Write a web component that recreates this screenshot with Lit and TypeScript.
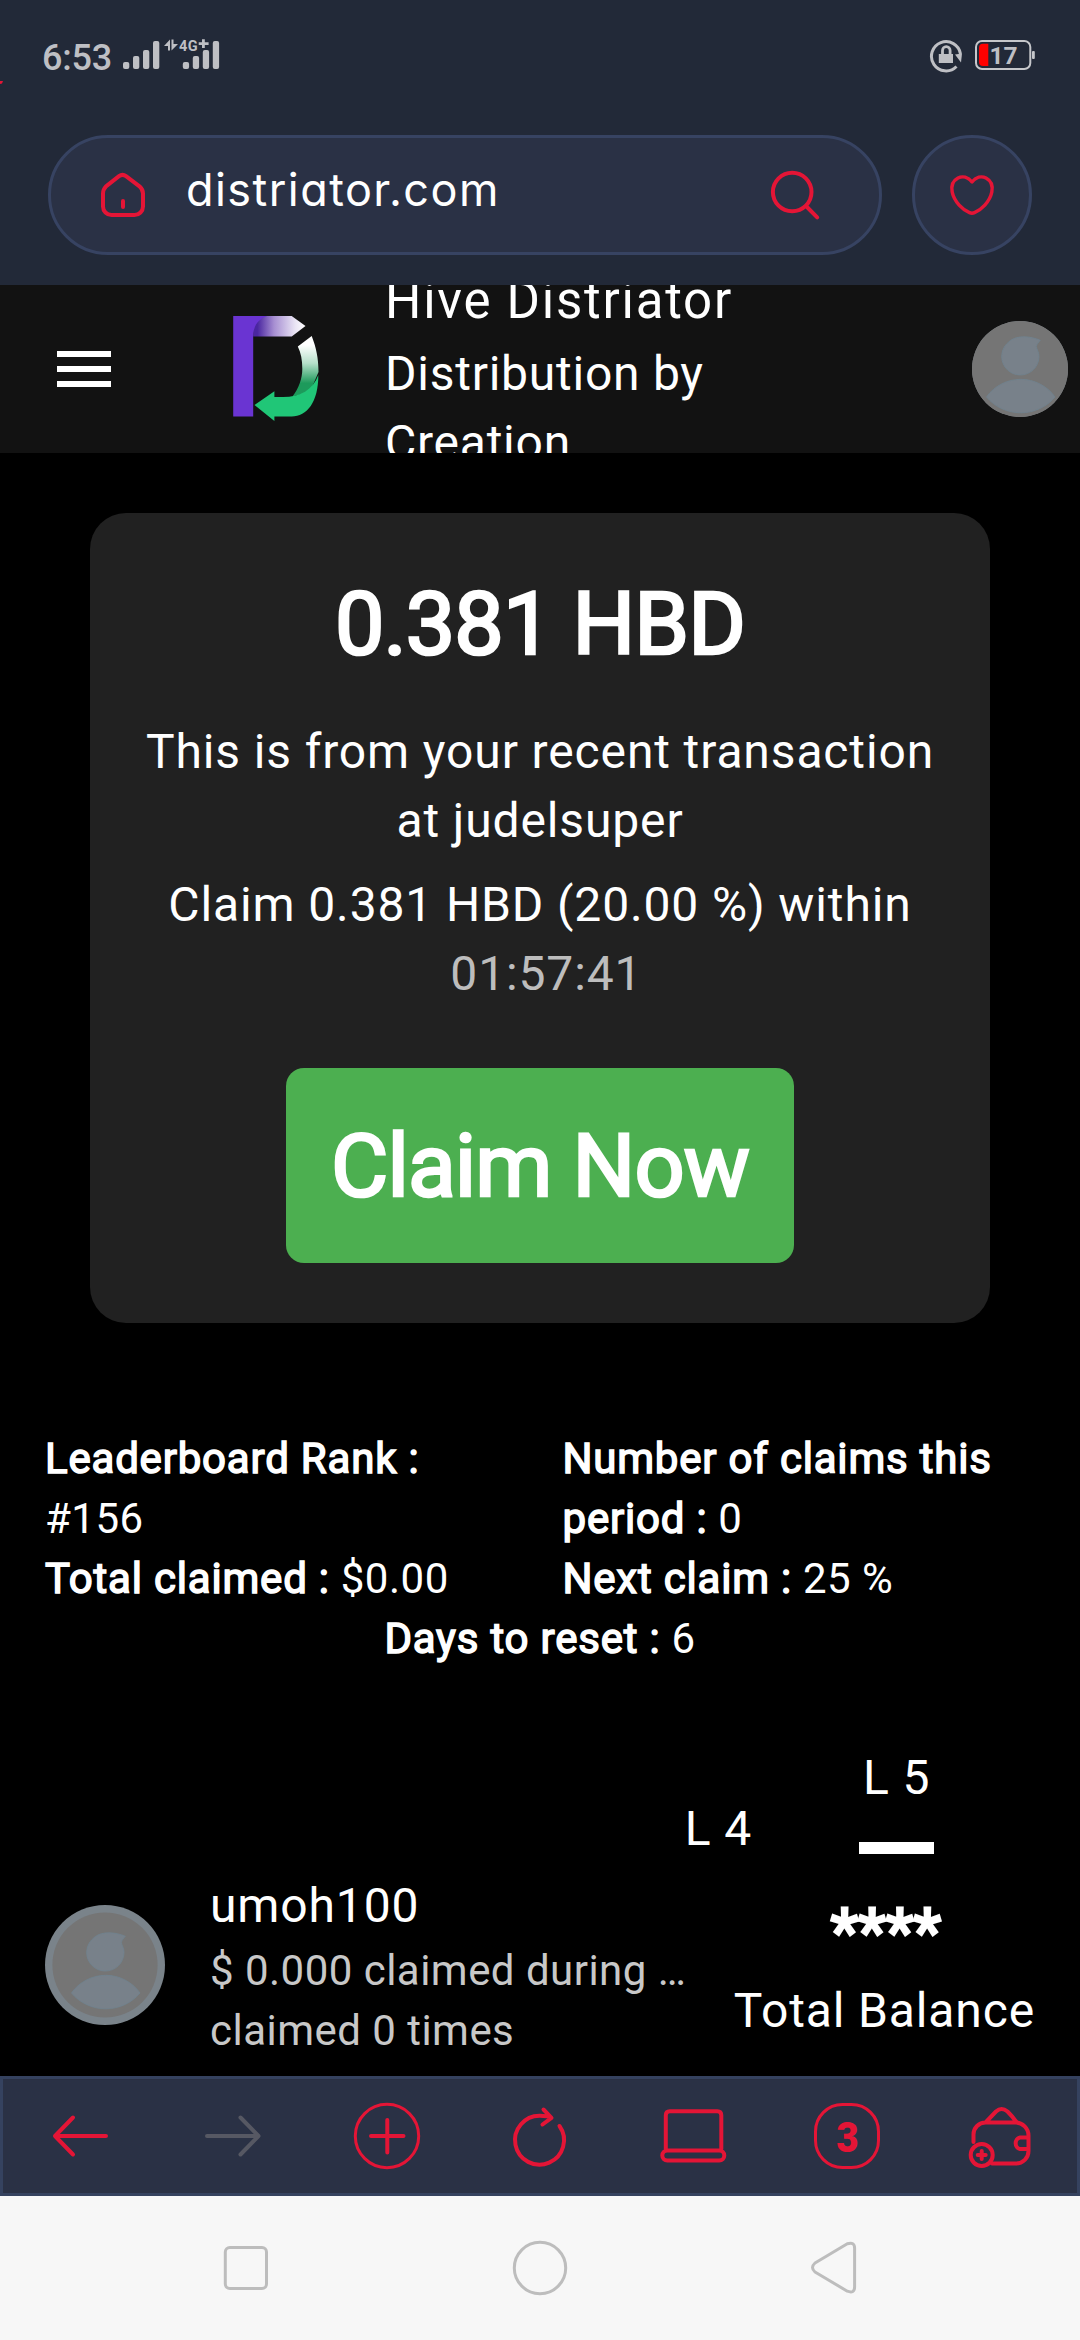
import { LitElement, html, css, svg } from 'lit';
import { customElement } from 'lit/decorators.js';

/* Placeholder portrait, drawn around the centre of its circle. */
const portrait = svg`
  <circle r="60" fill="#7a838a"/>
  <circle r="52.6" fill="#757575"/>
  <path d="M20.3 -28.7 C10 -33.3 -3 -33.5 -9.5 -28.5 C-15.5 -24 -18.3 -19 -18.3 -12 A18.6 18.6 0 0 0 0.3 6 A18.6 18.6 0 0 0 19 -12.500 C19 -17 17 -19 16.300 -22.500 C16.800 -25 18.500 -26.500 20.300 -28.700Z" fill="#78818a" stroke="#70838f" stroke-width=".8"/>
  <path d="M-33.500 28 A42 42 0 0 1 35 28 A45 45 0 0 1 -33.500 28Z" fill="#78818a" stroke="#70838f" stroke-width=".8"/>`;

@customElement('status-bar')
class StatusBar extends LitElement {
  static styles = css`
    :host { display: flex; align-items: flex-start; height: 135px; padding: 0 44px 0 0; box-sizing: border-box; font-family: Roboto, sans-serif; color: #bebfc4; }
    .mark { display: block; margin-top: 81px; width: 3px; height: 3px; }
    .time { margin: 35px 0 0 39px; width: 80px; font-size: 36px; line-height: 46px; font-weight: 500; letter-spacing: -.2px; }
    .signal { margin-top: 36px; display: block; }
    .spacer { flex: 1; }
    .lock { margin: 38px 12px 0 0; display: block; }
    .battery { margin: 38px 0 0; display: block; }
    text { font-family: Roboto, sans-serif; font-weight: 700; fill: #bebfc4; }
  `;
  render() {
    return html`
      <svg class="mark" viewBox="0 0 3 3"><path d="M0 0H3L2 2.500L0 3Z" fill="#e41536"/></svg>
      <div class="time">6:53</div>
      <svg class="signal" width="98" height="36" viewBox="122 36 98 36" fill="#bebfc4">
        <rect x="123" y="62" width="6.300" height="7" rx="2"/><rect x="133" y="56" width="6.300" height="13" rx="2"/>
        <rect x="143" y="50" width="6.300" height="19" rx="2"/><rect x="153" y="41" width="6.300" height="28" rx="2"/>
        <rect x="182.800" y="62" width="6.300" height="7" rx="2"/><rect x="192.800" y="56" width="6.300" height="13" rx="2"/>
        <rect x="202.800" y="50" width="6.300" height="19" rx="2"/><rect x="212.800" y="41" width="6.300" height="28" rx="2"/>
        <path d="M170 39.500V50.500H168V46H164Z"/><path d="M171.500 50.500V39.500H173.500V44H178Z"/>
        <text x="179" y="51" font-size="14.500" letter-spacing=".4">4G</text>
        <path d="M202 39.300h2.800v3h3.800v2.800h-3.800v3h-2.800v-3h-3.300v-2.800h3.300z"/>
      </svg>
      <div class="spacer"></div>
      <svg class="lock" width="34" height="36" viewBox="929 38 34 36">
        <path d="M956.500 66.500A14.600 14.600 0 1 1 960.500 54" fill="none" stroke="#bebfc4" stroke-width="3"/>
        <path d="M955 54.500L962 53.500L961 62.500Z" fill="#bebfc4"/>
        <rect x="938.800" y="54" width="14.200" height="9" fill="#bebfc4"/>
        <path d="M942.500 55V50.500a3.800 3.800 0 0 1 7.600 0V55" fill="none" stroke="#bebfc4" stroke-width="2.800"/>
      </svg>
      <svg class="battery" width="61" height="36" viewBox="975 38 61 36">
        <rect x="976" y="41" width="54.300" height="28" rx="6" fill="none" stroke="#c6c7cb" stroke-width="2"/>
        <path d="M988.300 43.700V66H983a4 4 0 0 1-4-4V47.700a4 4 0 0 1 4-4Z" fill="#ff0000"/>
        <text x="989.500" y="64.300" font-size="24.500">17</text>
        <rect x="1032" y="51" width="2.800" height="8" rx="1" fill="#c6c7cb"/>
      </svg>`;
  }
}

@customElement('address-bar')
class AddressBar extends LitElement {
  static styles = css`
    :host { display: flex; gap: 30px; padding: 0 48px 30px; }
    .pill { flex: 1; height: 120px; box-sizing: border-box; border: 3px solid #374362; border-radius: 60px; background: #2a3145; display: flex; align-items: center; padding: 0 57px 0 46px; }
    .heart { width: 120px; height: 120px; box-sizing: border-box; border: 3px solid #374362; border-radius: 50%; background: #2a3145; display: flex; align-items: center; justify-content: center; }
    .url { flex: 1; margin-left: 37px; padding-bottom: 11px; font: 45px/56px Inter, sans-serif; font-feature-settings: "cv11"; letter-spacing: 1.45px; color: #fff; }
    svg { display: block; }
  `;
  render() {
    return html`
      <div class="pill">
        <svg width="52" height="52" viewBox="97 169 52 52" fill="none" stroke="#e41536" stroke-width="4" stroke-linecap="round" stroke-linejoin="round">
          <path d="M119 176.200Q122.500 173.500 126 176.200L139.500 186.300Q143 189.500 143 193.500V206.500A8.500 8.500 0 0 1 134.500 215H111.500A8.500 8.500 0 0 1 103 206.500V193.500Q103 189.500 106 186.300Z"/>
          <path d="M123 201V207"/>
        </svg>
        <div class="url">distriator.com</div>
        <svg width="54" height="54" viewBox="768 168 54 54" fill="none" stroke="#e41536" stroke-width="4" stroke-linecap="round">
          <circle cx="792.200" cy="192" r="19.300"/><path d="M806.500 206.500L817.200 217.300"/>
        </svg>
      </div>
      <div class="heart">
        <svg width="52" height="52" viewBox="946 169 52 52" fill="none" stroke="#e41536" stroke-width="3.500" stroke-linejoin="round">
          <path d="M972 182C968 177 962.500 175.700 958 178C953 180.700 951 186 952.200 192C954.200 202 963 210 969.500 212.600Q972 213.700 974.500 212.600C981 210 989.800 202 991.800 192C993 186 991 180.700 986 178C981.500 175.700 976 177 972 182Z"/>
        </svg>
      </div>`;
  }
}

@customElement('site-header')
class SiteHeader extends LitElement {
  static styles = css`
    :host { display: flex; align-items: center; height: 168px; padding: 0 12px 0 48px; box-sizing: border-box; background: #121212; overflow: hidden; font-family: Roboto, sans-serif; color: #fff; }
    svg { display: block; flex: none; }
    .logo { margin: 0 66px 0 113px; }
    .title { width: 420px; padding-top: 5px; font-size: 48px; line-height: 69px; letter-spacing: .75px; }
    .name { font-size: 51px; letter-spacing: 1.75px; margin-bottom: 4px; }
    .avatar { margin-left: auto; border-radius: 50%; overflow: hidden; }
  `;
  render() {
    return html`
      <svg width="72" height="72" viewBox="0 0 72 72" fill="#fff"><rect x="9" y="18" width="54" height="6"/><rect x="9" y="33" width="54" height="6"/><rect x="9" y="48" width="54" height="6"/></svg>
      <svg class="logo" width="86" height="106" viewBox="233 316 86 106">
        <defs>
          <linearGradient id="tip" x1="0" x2="1" y1="0" y2="0"><stop offset=".08" stop-color="#4a26a0"/><stop offset=".4" stop-color="#a78fd2"/><stop offset=".8" stop-color="#e9e4f4"/><stop offset="1" stop-color="#fff"/></linearGradient>
          <linearGradient id="tail" x1="0" x2="0" y1="0" y2="1"><stop offset=".15" stop-color="#fff"/><stop offset=".45" stop-color="#b5dfc9"/><stop offset=".78" stop-color="#1d9a5b"/></linearGradient>
        </defs>
        <path d="M253.200 316H291.700L305.500 326L291.700 336.600H253.200Z" fill="url(#tip)"/>
        <path d="M233.200 316H267C259 319 253.200 325 253.200 336.600V416.500H233.200Z" fill="#6a34d2"/>
        <path d="M311.700 336C316 347 318.500 358 318.500 372L310 392L292.500 396.500C299 388 302.300 378 302.300 369C302.300 360 301 353 297.800 346.500Z" fill="url(#tail)"/>
        <path d="M318.300 375C318.500 402 307 416.500 291.700 416.500H274.400V421L254.500 405L274.400 391.300V397H283C300 397 313 390 318.300 375Z" fill="#20c677"/>
      </svg>
      <div class="title"><div class="name">Hive Distriator</div>Distribution by<br>Creation</div>
      <svg class="avatar" width="96" height="96" viewBox="-48 -48 96 96">${portrait}</svg>`;
  }
}

@customElement('claim-card')
class ClaimCard extends LitElement {
  static styles = css`
    :host { display: flex; flex-direction: column; align-items: center; margin: 60px 90px 0; height: 810px; padding-top: 51px; box-sizing: border-box; border-radius: 36px; background: #212121; color: #fff; font: 48px/69px Roboto, sans-serif; letter-spacing: .87px; text-align: center; }
    .amount, .claim { font-size: 88px; letter-spacing: -.9px; -webkit-text-stroke: .031em #fff; }
    .amount { line-height: 120px; margin-bottom: 33px; }
    .deadline { margin-top: 15px; }
    .timer { color: #bdbdbd; }
    .claim { margin-top: 60px; width: 508px; height: 195px; line-height: 195px; border-radius: 18px; background: #4caf50; }
  `;
  render() {
    return html`
      <div class="amount">0.381 HBD</div>
      <div>This is from your recent transaction<br>at judelsuper</div>
      <div class="deadline">Claim 0.381 HBD (20.00 %) within<br><span class="timer">&nbsp;01:57:41</span></div>
      <div class="claim">Claim Now</div>`;
  }
}

@customElement('claim-stats')
class ClaimStats extends LitElement {
  static styles = css`
    :host { display: grid; grid-template-columns: 517.500px 1fr; margin: 106px 45px 0; font: 42px/60px Roboto, sans-serif; letter-spacing: .5px; color: #fff; }
    .label { letter-spacing: .8px; -webkit-text-stroke: .035em #fff; }
    .wide { grid-column: 1 / 3; text-align: center; }
  `;
  render() {
    return html`
      <div><span class="label">Leaderboard Rank :</span><br>#156</div>
      <div><span class="label">Number of claims this<br>period :</span> 0</div>
      <div><span class="label">Total claimed :</span> $0.00</div>
      <div><span class="label">Next claim :</span> 25 %</div>
      <div class="wide"><span class="label">Days to reset :</span> 6</div>`;
  }
}

@customElement('account-summary')
class AccountSummary extends LitElement {
  static styles = css`
    :host { display: block; height: 407px; overflow: hidden; box-sizing: border-box; padding: 74px 45px 0; font: 48px/69px Roboto, sans-serif; letter-spacing: .87px; color: #fff; }
    .levels { display: flex; justify-content: flex-end; padding-right: 101px; height: 128px; }
    .l4 { margin: 51px 107px 0 0; }
    .l5 { width: 75px; }
    .l5 span { display: block; margin-left: 4px; white-space: nowrap; }
    .bar { height: 12px; margin-top: 30px; background: #fff; }
    .row { display: flex; }
    .avatar { display: block; margin: 34px 45px 0 0; }
    .who { width: 480px; white-space: nowrap; }
    .sub { padding-top: 1px; font-size: 42px; line-height: 60px; letter-spacing: .47px; color: #c8c8c8; }
    .balance { flex: 1; text-align: right; margin-left: -10px; }
    .stars { padding: 18px 94px 0 0; font-size: 64px; line-height: 87px; letter-spacing: 0; -webkit-text-stroke: .045em #fff; }
  `;
  render() {
    return html`
      <div class="levels">
        <div class="l4">L 4</div>
        <div class="l5"><span>L 5</span><div class="bar"></div></div>
      </div>
      <div class="row">
        <svg class="avatar" width="120" height="120" viewBox="-60 -60 120 120">${portrait}</svg>
        <div class="who">
          <div>umoh100</div>
          <div class="sub">$ 0.000 claimed during …<br>claimed 0 times</div>
        </div>
        <div class="balance"><div class="stars">****</div>Total Balance</div>
      </div>`;
  }
}

@customElement('browser-toolbar')
class BrowserToolbar extends LitElement {
  static styles = css`
    :host { display: grid; grid-template-columns: repeat(7, 1fr); height: 120px; box-sizing: border-box; border: 3px solid #35425f; background: #2a3145; align-items: center; justify-items: center; }
    svg { display: block; fill: none; stroke: #e41536; stroke-width: 4; stroke-linecap: round; stroke-linejoin: round; }
    .off { stroke: #565863; }
    text { font: 900 42px Roboto, sans-serif; fill: #e41536; stroke: none; text-anchor: middle; }
  `;
  render() {
    const icons = [
      svg`<path d="M26 0H-25M-7 -18.500L-25 0L-7 18.500"/>`,
      svg`<path class="off" d="M-26 0H25M7.500 -18.500L25.500 0L7.500 18.500"/>`,
      svg`<circle r="31.700" stroke-width="3"/><path d="M-16 0H16.500M.3 -16V16.500"/>`,
      svg`<path d="M19.500 -10A24.500 24.500 0 1 1 0 -20.300L10 -19.500M3.500 -26.500L11.500 -18.200L2.500 -11.500"/>`,
      svg`<path d="M-27.200 13V-20.700Q-27.200 -24.700 -23.200 -24.700H24.300Q28.300 -24.700 28.300 -20.700V13"/><rect x="-30.700" y="14.500" width="62" height="10" rx="5"/>`,
      svg`<rect x="-31.500" y="-31.500" width="63" height="63" rx="27" stroke-width="3"/><text transform="translate(.5 16.300) scale(.92 1.030)">3</text>`,
      svg`<path d="M-26.500 6V-1.500A12 12 0 0 1 -14.500 -13.500H15.500A13 13 0 0 1 28.500 -.500V15A12.500 12.500 0 0 1 16 27.500H-8M-14 -14L-4 -24.500Q1.500 -29.500 7.500 -24.500Q13 -19 16.500 -14M28 1.500H20A5 5.800 0 0 0 20 13H28"/><circle cx="-18.300" cy="19" r="11"/><path d="M-22.300 19H-14.300M-18.300 15V23"/>`,
    ];
    return icons.map((icon) => html`<svg width="72" height="72" viewBox="-36 -36 72 72">${icon}</svg>`);
  }
}

@customElement('system-nav')
class SystemNav extends LitElement {
  static styles = css`
    :host { display: grid; grid-template-columns: repeat(3, 294px); justify-content: center; align-items: center; justify-items: center; height: 144px; background: #f7f7f7; }
    svg { display: block; fill: none; stroke: #bdbdbd; stroke-width: 3; stroke-linejoin: round; }
  `;
  render() {
    return html`
      <svg width="60" height="60" viewBox="-30 -30 60 60"><rect x="-20.700" y="-20.500" width="41.200" height="41" rx="4.500"/></svg>
      <svg width="60" height="60" viewBox="-30 -30 60 60"><circle r="25.700"/></svg>
      <svg width="60" height="60" viewBox="-30 -30 60 60"><path d="M13.300 -24.300Q20.600 -26.500 20.600 -20V19Q20.600 25.800 13.300 23.200L-19 4Q-24 -.5 -19 -5Z"/></svg>`;
  }
}

@customElement('app-root')
class AppRoot extends LitElement {
  static styles = css`
    :host { display: flex; flex-direction: column; height: 2340px; overflow: hidden; background: #000; }
    .chrome { background: #222938; height: 285px; flex: none; }
    .page { height: 1791px; flex: none; overflow: hidden; display: flex; flex-direction: column; }
  `;
  render() {
    return html`
      <div class="chrome"><status-bar></status-bar><address-bar></address-bar></div>
      <div class="page">
        <site-header></site-header>
        <claim-card></claim-card>
        <claim-stats></claim-stats>
        <account-summary></account-summary>
      </div>
      <browser-toolbar></browser-toolbar>
      <system-nav></system-nav>`;
  }
}
